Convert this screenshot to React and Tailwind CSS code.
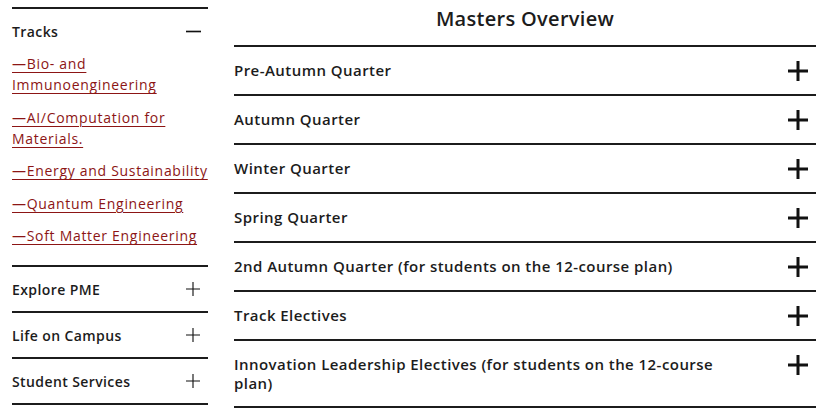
const TRACKS = [
  '—Bio- and Immunoengineering',
  '—AI/Computation for Materials.',
  '—Energy and Sustainability',
  '—Quantum Engineering',
  '—Soft Matter Engineering',
];

const SIDE_SECTIONS = ['Explore PME', 'Life on Campus', 'Student Services'];

const QUARTERS = [
  'Pre-Autumn Quarter',
  'Autumn Quarter',
  'Winter Quarter',
  'Spring Quarter',
  '2nd Autumn Quarter (for students on the 12-course plan)',
  'Track Electives',
  'Innovation Leadership Electives (for students on the 12-course plan)',
];

function Plus({ size = 14, stroke = 1.6 }) {
  return (
    <svg width={size} height={size} viewBox="0 0 20 20" fill="none" stroke="#111" strokeWidth={stroke}>
      <path d="M10 0v20M0 10h20" />
    </svg>
  );
}

function Minus() {
  return (
    <svg width="15" height="15" viewBox="0 0 20 20" fill="none" stroke="#111" strokeWidth="2.2">
      <path d="M0 10h20" />
    </svg>
  );
}

export default function App() {
  return (
    <div
      className="flex w-[831px] h-[418px] bg-white text-[#1c1c1c] overflow-hidden"
      style={{ fontFamily: '"Open Sans", sans-serif' }}
    >
      <aside className="ml-[12px] w-[196px] shrink-0 mt-[7px]">
        <div className="border-t-2 border-[#1c1c1c]">
          <div className="h-[44px] flex items-center justify-between pr-[7px]">
            <span className="text-[14px] font-semibold tracking-[0.4px]">Tracks</span>
            <Minus />
          </div>
          <ul className="flex flex-col gap-[11.5px] pb-[19px]">
            {TRACKS.map((t) => (
              <li key={t} className="text-[14px] leading-[21px] tracking-[0.7px]">
                <a href="#" className="text-[#8c1515] underline underline-offset-[3px] decoration-1">
                  {t}
                </a>
              </li>
            ))}
          </ul>
        </div>
        {SIDE_SECTIONS.map((s) => (
          <div key={s} className="border-t-2 border-[#1c1c1c] h-[46px] flex items-center justify-between pr-[8px]">
            <span className="text-[14px] font-semibold tracking-[0.4px]">{s}</span>
            <Plus />
          </div>
        ))}
        <div className="border-t-2 border-[#1c1c1c]" />
      </aside>

      <main className="ml-[26px] w-[582px] shrink-0">
        <h1 className="h-[38px] flex items-center justify-center text-[20px] font-semibold tracking-[0.3px]">
          Masters Overview
        </h1>
        <div className="mt-[7px]">
          {QUARTERS.map((q) => (
            <div key={q} className="border-t-2 border-[#1c1c1c] flex justify-between items-start py-[13.5px] pr-[8px]">
              <span className="text-[15px] leading-[19px] font-semibold tracking-[0.45px] max-w-[480px]">{q}</span>
              <Plus size={20} stroke={3} />
            </div>
          ))}
          <div className="border-t-2 border-[#1c1c1c]" />
        </div>
      </main>
    </div>
  );
}
